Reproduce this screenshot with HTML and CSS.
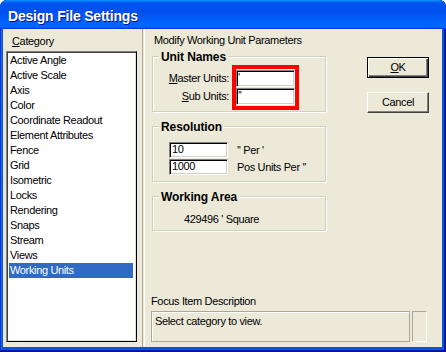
FILE: index.html
```html
<!DOCTYPE html>
<html lang="en">
<head>
<meta charset="UTF-8">
<title>Design File Settings</title>
<link rel="stylesheet" href="styles.css">
</head>
<body>
  <div class="window">
    <div class="titlebar"><span class="title">Design File Settings</span></div>
    <div class="client">
      <div class="sidebar">
        <div class="cat-label"><u>C</u>ategory</div>
        <div class="list">
          <div class="item">Active Angle</div>
          <div class="item">Active Scale</div>
          <div class="item">Axis</div>
          <div class="item">Color</div>
          <div class="item">Coordinate Readout</div>
          <div class="item">Element Attributes</div>
          <div class="item">Fence</div>
          <div class="item">Grid</div>
          <div class="item">Isometric</div>
          <div class="item">Locks</div>
          <div class="item">Rendering</div>
          <div class="item">Snaps</div>
          <div class="item">Stream</div>
          <div class="item">Views</div>
          <div class="item selected">Working Units</div>
        </div>
      </div>
      <div class="splitter"></div>
      <div class="panel">
        <div class="panel-top">
          <div class="main">
            <div class="heading">Modify Working Unit Parameters</div>

            <div class="group units">
              <div class="legend">Unit Names</div>
              <div class="labels">
                <div class="label"><u>M</u>aster Units:</div>
                <div class="label"><u>S</u>ub Units:</div>
              </div>
              <div class="mark">
                <div class="field">'</div>
                <div class="field">''</div>
              </div>
            </div>

            <div class="group resolution">
              <div class="legend">Resolution</div>
              <div class="row">
                <div class="field num">10</div>
                <div class="row-label">'' Per '</div>
              </div>
              <div class="row">
                <div class="field num">1000</div>
                <div class="row-label">Pos Units Per ''</div>
              </div>
            </div>

            <div class="group area">
              <div class="legend">Working Area</div>
              <div class="area-text">429496 ' Square</div>
            </div>
          </div>

          <div class="buttons">
            <div class="btn default"><u>O</u>K</div>
            <div class="btn">Cancel</div>
          </div>
        </div>

        <div class="focus">
          <div class="focus-label">Focus Item Description</div>
          <div class="focus-row">
            <div class="focus-box">Select category to view.</div>
            <div class="focus-side"></div>
          </div>
        </div>
      </div>
    </div>
  </div>
</body>
</html>
```

FILE: styles.css
```css
body {
  margin: 0;
  background: #fff;
  font-family: "Liberation Sans", Arial, sans-serif;
  font-size: 11px;
  letter-spacing: -0.35px;
  color: #000;
}

.window {
  width: 446px;
  height: 352px;
  display: flex;
  flex-direction: column;
  background: #0855dd;
  border-radius: 7px 7px 0 0;
  box-shadow: inset -1px -1px #00138c, inset 1px 1px #0831d9, inset -2px -2px #001ea0, inset 2px 2px #166aee;
  overflow: hidden;
}

.titlebar {
  height: 29px;
  flex: none;
  box-sizing: border-box;
  padding: 4px 0 0 8px;
  background: linear-gradient(180deg, #0997ff, #0053ee 10%, #0050ee 40%, #0066ff 85%, #0066ff 92%, #005bff 95%, #003dd7 97%, #003dd7);
  border-radius: 7px 7px 0 0;
}

.title {
  display: block;
  line-height: 25px;
  font-size: 14px;
  font-weight: bold;
  letter-spacing: -0.2px;
  color: #fff;
  text-shadow: 1px 1px #0f1089;
}

.client {
  flex: 1;
  display: flex;
  margin: 0 4px 5px 3px;
  background: #ece9d8;
}

/* left: category list */
.sidebar {
  width: 139px;
  flex: none;
  display: flex;
  flex-direction: column;
  box-sizing: border-box;
  padding: 5px 0 5px 3px;
}

.cat-label {
  line-height: 14px;
  padding-left: 6px;
}

.list {
  flex: 1;
  width: 131px;
  box-sizing: border-box;
  margin-top: 3px;
  background: #fff;
  border: 1px solid;
  border-color: #808080 #000 #000 #808080;
  box-shadow: inset 1px 1px #404040, inset -1px -1px #e3e0d0;
  padding: 1px 3px 0 2px;
}

.item {
  height: 15px;
  line-height: 15px;
  padding-left: 1px;
  white-space: nowrap;
}

.item.selected {
  background: #316ac5;
  color: #fff;
}

.splitter {
  width: 1px;
  flex: none;
  border-left: 1px solid #aca899;
  border-right: 1px solid #fff;
}

/* right panel */
.panel {
  flex: 1;
  display: flex;
  flex-direction: column;
  padding: 4px 0 5px 6px;
}

.panel-top {
  display: flex;
}

.main {
  width: 174px;
  margin-left: 1px;
}

.heading {
  line-height: 14px;
  padding-left: 2px;
  white-space: nowrap;
}

.group {
  position: relative;
  box-sizing: border-box;
  width: 174px;
  border: 1px solid #d0d0bf;
  box-shadow: inset 1px 1px #fff, 1px 1px #fff;
}

.legend {
  position: absolute;
  top: -7px;
  left: 6px;
  padding: 0 2px;
  line-height: 14px;
  font-size: 12px;
  font-weight: bold;
  letter-spacing: -0.1px;
  background: #ece9d8;
}

.field {
  box-sizing: border-box;
  width: 59px;
  height: 17px;
  line-height: 13px;
  padding-left: 1px;
  background: #fff;
  border: 1px solid;
  border-color: #808080 #fff #fff #808080;
  box-shadow: inset 1px 1px #000, inset -1px -1px #d4d0c8;
}

.units {
  display: flex;
  margin-top: 9px;
  padding: 8px 0 1px 0;
}

.labels {
  width: 76px;
  padding: 5px 3px 0 0;
  text-align: right;
}

.label {
  line-height: 17px;
  margin-bottom: 1px;
  white-space: nowrap;
}

.mark {
  border: 4px solid #ff0000;
  padding: 1px 0 1px 0;
}

.mark .field + .field {
  margin-top: 1px;
}

.resolution {
  margin-top: 14px;
  padding: 15px 0 6px 16px;
}

.row {
  display: flex;
  align-items: center;
}

.row + .row {
  margin-top: 1px;
}

.field.num {
  height: 16px;
  line-height: 12px;
  padding-left: 2px;
}

.row-label {
  margin-left: 9px;
  white-space: nowrap;
}

.area {
  margin-top: 14px;
  padding: 15px 0 4px 31px;
}

.area-text {
  line-height: 14px;
}

/* buttons */
.buttons {
  margin-left: 41px;
  padding-top: 24px;
}

.btn {
  box-sizing: border-box;
  width: 62px;
  height: 21px;
  line-height: 19px;
  text-align: center;
  border: 1px solid;
  border-color: #fff #404040 #404040 #fff;
  box-shadow: inset -1px -1px #808080;
}

.btn.default {
  border-color: #000;
  box-shadow: inset 1px 1px #fff, inset -1px -1px #404040, inset -2px -2px #808080;
}

.btn + .btn {
  margin-top: 14px;
}

/* focus description */
.focus {
  margin-top: auto;
}

.focus-label {
  line-height: 14px;
}

.focus-row {
  display: flex;
  margin-top: 3px;
}

.focus-box {
  box-sizing: border-box;
  width: 259px;
  height: 31px;
  padding: 2px 0 0 3px;
  line-height: 14px;
  border: 1px solid #aca899;
  box-shadow: inset 1px 1px #fff;
}

.focus-side {
  box-sizing: border-box;
  width: 15px;
  height: 31px;
  margin-left: 2px;
  border: 1px solid;
  border-color: #aca899 #fff #fff #aca899;
}
```
